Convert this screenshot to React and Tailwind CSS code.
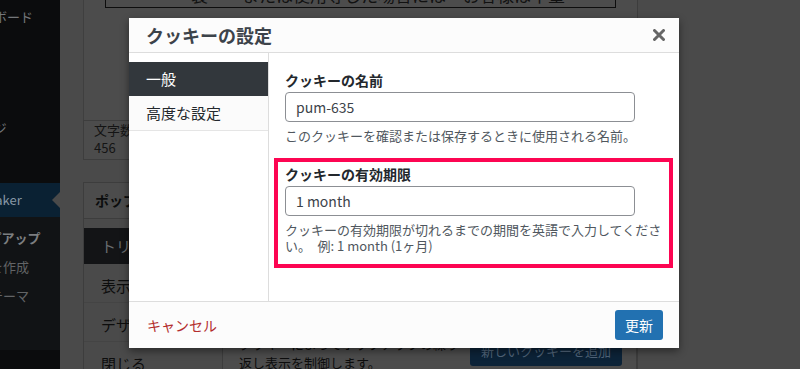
import React from "react";

const menu = [
  { label: "ダッシュボード", h: "h-[34px]" },
  { sep: true },
  { label: "投稿", h: "h-[34px]" },
  { label: "メディア", h: "h-[34px]" },
  { label: "固定ページ", h: "h-[34px]" },
  { label: "コメント", h: "h-[38px]" },
];

const submenu = [
  { label: "すべてのポップアップ", current: true },
  { label: "ポップアップを作成" },
  { label: "ポップアップテーマ" },
];

const tabs = ["トリガー", "表示", "デザイン", "閉じる"];

const Sidebar = () => {
  return (
    <div className="w-[60px] shrink-0 overflow-hidden bg-[#0b0c0d]">
      <div className="-ml-[100px] flex w-[160px] flex-col text-[13px] text-[#74777a]">
        {menu.map((item, i) =>
          item.sep ? (
            <div key={i} className="h-[9px]" />
          ) : (
            <div key={i} className={`${item.h} flex items-center pl-[42px] whitespace-nowrap`}>
              {item.label}
            </div>
          )
        )}
        {/* current menu */}
        <div className="relative flex h-[34px] items-center bg-[#0a2133] pl-[42px] text-[#8797a5]">
          Popup Maker
          <span className="absolute right-0 top-[9px] h-0 w-0 border-y-[8px] border-r-[8px] border-y-transparent border-r-[#4a4a4a]" />
        </div>
        <div className="flex flex-col bg-[#111315] pt-[6px] pb-[40px]">
          {submenu.map((s) => (
            <div
              key={s.label}
              className={`flex h-[29px] items-center pl-[12px] whitespace-nowrap ${
                s.current ? "font-bold text-[#7c7e80]" : "text-[#626466]"
              }`}
            >
              {s.label}
            </div>
          ))}
        </div>
      </div>
    </div>
  );
};

const Content = () => {
  return (
    <div className="flex-1 pl-[23px]">
      <div className="flex min-h-full w-[555px] flex-col border-r border-[#3d3d3d]">
        {/* editor */}
        <div className="h-[120px] shrink-0 border-l border-[#3f3f3f] bg-[#4c4c4c] pl-[21px]">
          <div className="-mt-[24px] h-[32px] w-[511px] overflow-hidden border border-[#0d0d0d] pl-[85px] pt-[6px] text-[17px] leading-[24px] whitespace-nowrap text-[#111111]">
            製　　または使用等した場合には　お客様は不望
          </div>
        </div>
        {/* word count */}
        <div className="w-[200px] shrink-0 border border-[#3d3d3d] bg-[#4c4c4c] pl-[10px] pb-[2px] text-[13px] leading-[18px] text-[#141414]">
          <div>文字数</div>
          <div>456</div>
        </div>
        {/* popup settings */}
        <div className="mt-[22px] flex shrink-0 flex-col border border-[#3d3d3d] bg-[#4c4c4c]">
          <div className="flex h-[36px] shrink-0 items-center border-b border-[#3d3d3d] pl-[11px] text-[14px] font-bold text-[#0b0c0d]">
            ポップアップ設定
          </div>
          <div className="flex">
            <div className="w-[139px] shrink-0 border-r border-[#3d3d3d] bg-[#4a4a4a] pt-[9px]">
              {tabs.map((t, i) => (
                <div
                  key={t}
                  className={`flex items-center pl-[17px] text-[15px] ${
                    i === 0
                      ? "h-[36px] bg-[#131416] text-[#6a6d70]"
                      : "h-[39px] border-b border-[#444444] pt-[6px] text-[#0d0d0d]"
                  }`}
                >
                  {t}
                </div>
              ))}
            </div>
            <div className="flex gap-[6px] pl-[16px] pt-[115px]">
              <p className="w-[225px] text-[13px] leading-[19px] text-[#0d0d0d]">
                クッキーによってポップアップの繰り返し表示を制御します。
              </p>
              <div className="mt-[2px] flex h-[30px] items-center rounded-[3px] bg-[#0c2338] px-[11px] text-[13px] whitespace-nowrap text-[#51657a]">
                新しいクッキーを追加
              </div>
            </div>
          </div>
        </div>
      </div>
    </div>
  );
};

const Field = ({ label, value, children }) => (
  <div>
    <div className="text-[14px] font-bold leading-[18px] text-[#23282d]">{label}</div>
    <div className="mt-[3px] flex h-[30px] w-[350px] items-center rounded-[4px] border border-[#8c8f94] bg-white px-[10px] text-[14px] text-[#3c434a]">
      {value}
    </div>
    <p className="mt-[6px] text-[13px] leading-[16px] text-[#50575e]">{children}</p>
  </div>
);

const CookieModal = () => {
  return (
    <div className="absolute left-[129px] top-[18px] flex h-[330px] w-[550px] flex-col bg-white shadow-[0_3px_8px_rgba(0,0,0,0.45)]">
      {/* header */}
      <div className="flex h-[35px] shrink-0 items-center justify-between border-b border-[#dddddd] bg-[#fcfcfc] pl-[17px] pr-[14px]">
        <h1 className="text-[18px] font-bold text-[#3c434a]">クッキーの設定</h1>
        <svg width="12" height="12" viewBox="0 0 12 12">
          <path d="M1.5 1.5 L10.5 10.5 M10.5 1.5 L1.5 10.5" stroke="#666666" strokeWidth="3" strokeLinecap="round" />
        </svg>
      </div>

      {/* body */}
      <div className="flex min-h-0 flex-1">
        <div className="w-[140px] shrink-0 border-r border-[#dddddd] pt-[9px] text-[15px]">
          <div className="flex h-[34px] items-center bg-[#32373c] pl-[17px] text-white">一般</div>
          <div className="flex h-[35px] items-center border-b border-[#e5e5e5] bg-[#fbfbfb] pl-[17px] text-[#23282d]">
            高度な設定
          </div>
        </div>
        <div className="flex-1 pl-[16px] pt-[18px]">
          <Field label="クッキーの名前" value="pum-635">
            このクッキーを確認または保存するときに使用される名前。
          </Field>
          <div className="-ml-[11px] mt-[14px] w-[399px] border-4 border-[#fd0552] pb-[10px] pl-[7px] pr-[4px] pt-[3px]">
            <Field label="クッキーの有効期限" value="1 month">
              クッキーの有効期限が切れるまでの期間を英語で入力してください。　例: 1 month (1ヶ月)
            </Field>
          </div>
        </div>
      </div>

      {/* footer */}
      <div className="flex h-[47px] shrink-0 items-center justify-between border-t border-[#dddddd] bg-[#fcfcfc] pl-[18px] pr-[16px]">
        <span className="text-[14px] text-[#b32d2e]">キャンセル</span>
        <button className="flex h-[30px] items-center rounded-[3px] bg-[#2271b1] px-[10px] text-[14px] text-white">
          更新
        </button>
      </div>
    </div>
  );
};

export default function App() {
  return (
    <div className="relative h-[369px] w-[800px] overflow-hidden bg-[#4a4a4a] font-['Noto_Sans_CJK_JP',sans-serif]">
      <div className="flex h-full">
        <Sidebar />
        <Content />
      </div>
      <CookieModal />
    </div>
  );
}
